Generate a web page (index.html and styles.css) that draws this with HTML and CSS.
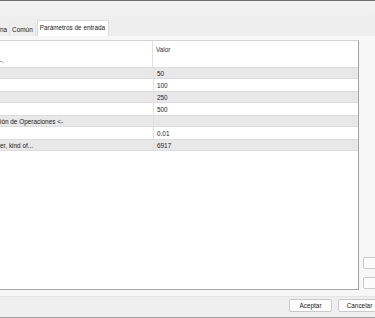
FILE: index.html
```html
<!DOCTYPE html>
<html lang="es">
<head>
    <meta charset="UTF-8">
    <meta name="viewport" content="width=device-width, initial-scale=1.0">
    <title>Parámetros de entrada</title>
    <link rel="stylesheet" href="styles.css">
</head>
<body>

<div class="window">
    <div class="topbar"></div>

    <div class="tabs">
        <span class="tab">na</span>
        <span class="tab">Común</span>
        <span class="tab active">Parámetros de entrada</span>
    </div>

    <div class="panel">
        <div class="grid">
            <div class="row head"><div class="cell name">-.</div><div class="cell value">Valor</div></div>
            <div class="row alt"><div class="cell name"></div><div class="cell value">50</div></div>
            <div class="row"><div class="cell name"></div><div class="cell value">100</div></div>
            <div class="row alt"><div class="cell name"></div><div class="cell value">250</div></div>
            <div class="row"><div class="cell name"></div><div class="cell value">500</div></div>
            <div class="row alt"><div class="cell name">ión de Operaciones &lt;-</div><div class="cell value"></div></div>
            <div class="row"><div class="cell name"></div><div class="cell value">0.01</div></div>
            <div class="row alt"><div class="cell name">er, kind of...</div><div class="cell value">6917</div></div>
        </div>
        <div class="side">
            <button class="mini"></button>
            <button class="mini"></button>
        </div>
    </div>

    <div class="footer">
        <button class="btn">Aceptar</button>
        <button class="btn">Cancelar</button>
    </div>
</div>

</body>
</html>
```

FILE: styles.css
```css
body {
    margin: 0;
    padding: 0;
    width: 375px;
    height: 318px;
    overflow: hidden;
    font-family: "Liberation Sans", Arial, sans-serif;
    font-size: 6.4px;
    color: #222222;
    background: #efefef;
}

.window {
    display: flex;
    flex-direction: column;
    height: 318px;
}

.topbar {
    height: 19px;
    border-top: 1px solid #6f6f6f;
    background: linear-gradient(#f3f3f3, #eeeeee);
}

.tabs {
    display: flex;
    align-items: flex-end;
    height: 16px;
    background: #eeeeee;
}

.tab {
    display: flex;
    align-items: center;
    height: 13px;
    padding: 0 2px;
    border-right: 1px solid #e2e2e2;
    white-space: nowrap;
}

.tab:first-child {
    padding-left: 0;
}

.tab.active {
    height: 16px;
    padding: 0 3px 2px 2px;
    box-sizing: border-box;
    background: #ffffff;
    border: 1px solid #dcdcdc;
    border-bottom: none;
    margin-left: 1px;
}

.panel {
    display: flex;
    height: 260px;
    box-sizing: border-box;
    padding: 4px 0 6px 0;
    background: #f7f7f7;
}

.grid {
    width: 358px;
    background: #ffffff;
    border-top: 1px solid #d2d2d2;
    border-right: 1px solid #a4a4a4;
    border-bottom: 1px solid #a4a4a4;
    overflow: hidden;
}

.row {
    display: flex;
    height: 12px;
    box-sizing: border-box;
}

.row.alt {
    background: #e8e8e8;
    border-top: 1px solid #dcdcdc;
    border-bottom: 1px solid #dcdcdc;
}

.row.head {
    height: 26px;
}

.cell {
    display: flex;
    align-items: center;
    white-space: nowrap;
    overflow: hidden;
}

.cell.name {
    width: 153px;
    border-right: 1px solid #e2e2e2;
}

.cell.value {
    flex: 1;
    padding-left: 3px;
}

.head .cell.name {
    align-items: flex-end;
    padding-bottom: 3px;
    box-sizing: border-box;
}

.head .cell.value {
    align-items: flex-start;
    padding-top: 5px;
    color: #333333;
}

.side {
    flex: 1;
    display: flex;
    flex-direction: column;
    justify-content: flex-end;
    gap: 8px;
    padding: 0 0 1px 4px;
    overflow: hidden;
}

.mini {
    width: 20px;
    height: 12px;
    padding: 0;
    background: #fbfbfb;
    border: 1px solid #cacaca;
    border-radius: 2px;
}

.footer {
    display: flex;
    justify-content: flex-end;
    gap: 6px;
    height: 18px;
    padding: 2px 0 0 0;
    margin-right: -6px;
    border-top: 1px solid #e4e4e4;
    border-bottom: 1px solid #a4a4a4;
    background: #efefef;
}

.btn {
    width: 43px;
    height: 13px;
    padding: 0;
    font-family: inherit;
    font-size: 6.4px;
    color: #222222;
    background: #fdfdfd;
    border: 1px solid #c9c9c9;
    border-radius: 2px;
}
```
